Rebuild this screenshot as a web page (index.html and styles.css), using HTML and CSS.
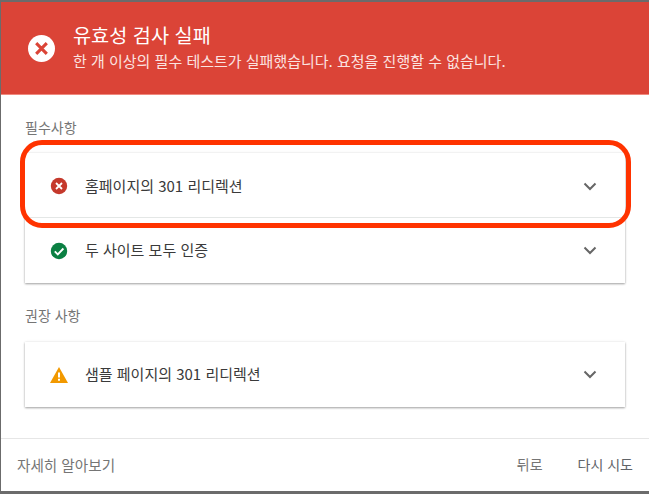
FILE: index.html
```html
<!DOCTYPE html>
<html lang="ko">
  <head>
    <meta charset="UTF-8" />
    <title>유효성 검사 실패</title>
    <link rel="stylesheet" href="styles.css">
  </head>
  <body>
    <div class="dialog">
      <header class="header">
        <svg class="header-icon" viewBox="0 0 28 28">
          <circle cx="14" cy="14" r="14" fill="#fff" />
          <path d="M8.500 8.500l11 11M19.500 8.500l-11 11" stroke="#db4437" stroke-width="3.200" fill="none" />
        </svg>
        <div class="header-text">
          <h1 class="header-title">유효성 검사 실패</h1>
          <p class="header-description">한 개 이상의 필수 테스트가 실패했습니다. 요청을 진행할 수 없습니다.</p>
        </div>
      </header>

      <main class="content">
        <h2 class="section-title">필수사항</h2>
        <div class="card-group">
          <div class="highlight"></div>
          <div class="card-row">
            <svg class="status-icon" viewBox="0 0 18 18">
              <circle cx="9" cy="9" r="8.200" fill="#c5392c" />
              <path d="M6 6l6 6M12 6l-6 6" stroke="#fff" stroke-width="1.800" fill="none" />
            </svg>
            <span class="card-label">홈페이지의 301 리디렉션</span>
            <svg class="chevron" viewBox="0 0 14 9">
              <path d="M1.500 1.500L7 7l5.500-5.500" stroke="#666" stroke-width="2" fill="none" />
            </svg>
          </div>
          <div class="card-row">
            <svg class="status-icon" viewBox="0 0 18 18">
              <circle cx="9" cy="9" r="8.200" fill="#0b8043" />
              <path d="M4.800 9.300l3 3 5.600-5.800" stroke="#fff" stroke-width="1.900" fill="none" />
            </svg>
            <span class="card-label">두 사이트 모두 인증</span>
            <svg class="chevron" viewBox="0 0 14 9">
              <path d="M1.500 1.500L7 7l5.500-5.500" stroke="#666" stroke-width="2" fill="none" />
            </svg>
          </div>
        </div>

        <h2 class="section-title section-title-second">권장 사항</h2>
        <div class="card-group">
          <div class="card-row">
            <svg class="status-icon" viewBox="0 0 18 16">
              <path d="M9 0l9 16H0z" fill="#f29900" />
              <path d="M8 5.500h2v5H8zM8 11.700h2v2H8z" fill="#fff" />
            </svg>
            <span class="card-label">샘플 페이지의 301 리디렉션</span>
            <svg class="chevron" viewBox="0 0 14 9">
              <path d="M1.500 1.500L7 7l5.500-5.500" stroke="#666" stroke-width="2" fill="none" />
            </svg>
          </div>
        </div>
      </main>

      <footer class="footer">
        <a class="footer-link footer-link-wide">자세히 알아보기</a>
        <div class="footer-actions">
          <a class="footer-link">뒤로</a>
          <a class="footer-link footer-link-strong">다시 시도</a>
        </div>
      </footer>
    </div>
  </body>
</html>
```

FILE: styles.css
```css
:root {
  --red: #db4437;
  --text-primary: #3a3a3a;
  --text-secondary: #757575;
}

* {
  margin: 0;
  padding: 0;
  box-sizing: border-box;
}

html,
body {
  height: 100%;
  overflow: hidden;
}

body {
  font-family: "Noto Sans CJK KR", Roboto, sans-serif;
  background: #6b6b6b;
  padding: 2px 0 3px 1px;
}

.dialog {
  height: 489px;
  background: #ffffff;
  display: flex;
  flex-direction: column;
}

.header {
  height: 93px;
  flex: none;
  background: var(--red);
  border-bottom: 1px solid #f0897e;
  display: flex;
  align-items: center;
  gap: 18px;
  padding-left: 27px;
  color: #ffffff;
}

.header-icon {
  width: 27px;
  height: 27px;
  flex: none;
}

.header-title {
  font-size: 19.700px;
  font-weight: 400;
  line-height: 26px;
}

.header-description {
  font-size: 15px;
  line-height: 26px;
  color: #fbe3e0;
}

.content {
  flex: 1;
  padding: 22px 24px 0;
}

.section-title {
  font-size: 14px;
  font-weight: 400;
  line-height: 20px;
  color: var(--text-secondary);
  margin-bottom: 16px;
}

.section-title-second {
  margin-top: 22px;
  margin-bottom: 17px;
}

.card-group {
  position: relative;
  background: #ffffff;
  box-shadow: 0 1px 2px rgba(0, 0, 0, 0.35), 0 0 3px rgba(0, 0, 0, 0.08);
}

.card-row {
  height: 65px;
  display: flex;
  align-items: center;
  padding: 2px 28px 0 25px;
  border-bottom: 1px solid #e4e7e6;
}

.card-row:last-of-type {
  padding-top: 0;
  border-bottom: none;
}

.status-icon {
  width: 18px;
  height: 18px;
  flex: none;
}

.card-label {
  flex: 1;
  margin-left: 17px;
  padding-bottom: 2px;
  font-size: 15px;
  color: var(--text-primary);
}

.chevron {
  width: 14px;
  height: 9px;
  flex: none;
}

/* red marker drawn over the first row */
.highlight {
  position: absolute;
  left: -5px;
  top: -13px;
  width: 611px;
  height: 88px;
  border: 5px solid #ff3300;
  border-radius: 22px;
}

.footer {
  height: 53px;
  flex: none;
  border-top: 1px solid #e6e6e6;
  display: flex;
  align-items: center;
  justify-content: space-between;
  padding: 0 16px 2px;
}

.footer-actions {
  display: flex;
  gap: 35px;
}

.footer-link {
  font-size: 14px;
  color: var(--text-secondary);
}

.footer-link-wide {
  font-size: 14.600px;
}

.footer-link-strong {
  color: #5f6368;
}
```
